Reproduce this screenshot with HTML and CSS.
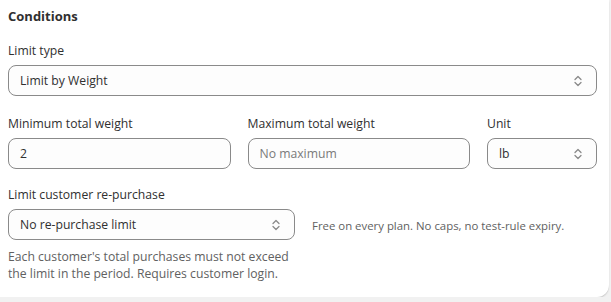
FILE: index.html
```html
<!DOCTYPE html>
<html>
<head>
<meta charset="utf-8">
<link rel="stylesheet" href="styles.css">
</head>
<body>
<div class="card">
  <h2 class="title">Conditions</h2>
  <div class="field">
    <label class="label">Limit type</label>
    <div class="control select">
      <span>Limit by Weight</span>
      <svg class="chev" viewBox="0 0 12 16" width="12" height="16"><path d="M3 6.5L6 3.5L9 6.5M3 9.5L6 12.5L9 9.5" fill="none" stroke="#8a8a8a" stroke-width="1.3" stroke-linecap="round" stroke-linejoin="round"/></svg>
    </div>
  </div>
  <div class="row">
    <div class="field grow">
      <label class="label">Minimum total weight</label>
      <div class="control"><span>2</span></div>
    </div>
    <div class="field grow">
      <label class="label">Maximum total weight</label>
      <div class="control"><span class="ph">No maximum</span></div>
    </div>
    <div class="field unit">
      <label class="label">Unit</label>
      <div class="control select">
        <span>lb</span>
        <svg class="chev" viewBox="0 0 12 16" width="12" height="16"><path d="M3 6.5L6 3.5L9 6.5M3 9.5L6 12.5L9 9.5" fill="none" stroke="#8a8a8a" stroke-width="1.3" stroke-linecap="round" stroke-linejoin="round"/></svg>
      </div>
    </div>
  </div>
  <div class="row last">
    <div class="field half">
      <label class="label">Limit customer re-purchase</label>
      <div class="control select">
        <span>No re-purchase limit</span>
        <svg class="chev" viewBox="0 0 12 16" width="12" height="16"><path d="M3 6.5L6 3.5L9 6.5M3 9.5L6 12.5L9 9.5" fill="none" stroke="#8a8a8a" stroke-width="1.3" stroke-linecap="round" stroke-linejoin="round"/></svg>
      </div>
      <p class="help">Each customer's total purchases must not exceed the limit in the period. Requires customer login.</p>
    </div>
    <p class="side">Free on every plan. No caps, no test-rule expiry.</p>
  </div>
</div>
</body>
</html>
```
FILE: styles.css
```css
html, body {
  margin: 0;
  padding: 0;
  background: #f1f1f1;
}
body {
  font-family: "Open Sans", "Noto Sans", sans-serif;
  font-size: 12.2px;
  color: #303030;
}
.card {
  width: 609px;
  height: 297px;
  box-sizing: border-box;
  background: #ffffff;
  border-radius: 0 0 12px 0;
  box-shadow: 0 1px 1px rgba(0,0,0,0.12), 0 2px 2px rgba(0,0,0,0.05);
  padding: 6px 12px 0 8px;
}
.title {
  margin: 0 0 17px 0;
  font-size: 13px;
  font-weight: 700;
  line-height: 20px;
}
.field {
  display: flex;
  flex-direction: column;
}
.label {
  line-height: 16px;
  margin-bottom: 6px;
}
.control {
  height: 31px;
  box-sizing: border-box;
  border: 1px solid #8a8a8a;
  border-radius: 8px;
  background: #fdfdfd;
  display: flex;
  align-items: center;
  justify-content: space-between;
  padding: 0 10px 0 11px;
}
.select { padding-right: 12px; }
.chev { display: block; }
.ph { color: #7a7a7a; }
.row {
  display: flex;
  gap: 17px;
  margin-top: 20px;
}
.row.last { margin-top: 18px; }
.grow { flex: 1; }
.unit { width: 110px; }
.half { width: 287px; flex: none; }
.help {
  margin: 8px 0 0 0;
  line-height: 17px;
  color: #616161;
}
.side {
  margin: 31px 0 0 0;
  color: #616161;
  font-size: 11.4px;
}
```
